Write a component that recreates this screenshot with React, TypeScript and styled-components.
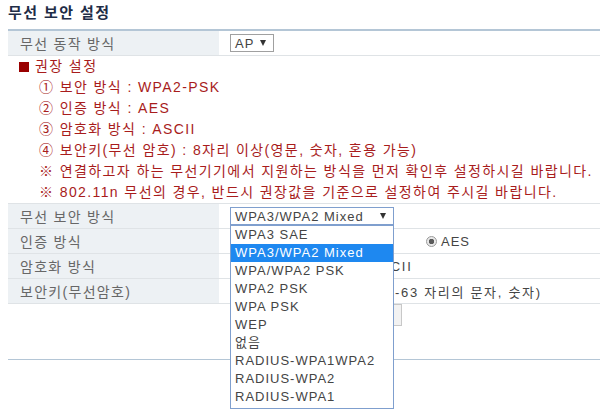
import * as React from 'react'
import styled, { createGlobalStyle } from 'styled-components'

const GlobalStyle = createGlobalStyle`
  html, body {
    margin: 0;
    padding: 0;
    background: #ffffff;
  }
  body {
    font-family: "Liberation Sans", "Noto Sans CJK KR", sans-serif;
    font-size: 13px;
  }
`

const colors = {
  navy: '#1f2d47',
  red: '#a81c1c',
  darkRed: '#990000',
  label: '#676767',
  labelBg: '#edf1f4',
  rowLine: '#dfe3e6',
  tableLine: '#b4c6d6',
  selectBlue: '#7f9fce',
  highlight: '#1e88f0',
}

const Page = styled.div`
  width: 592px;
  min-height: 100vh;
  padding-left: 8px;
`

const Title = styled.h1`
  margin: 0;
  height: 29px;
  box-sizing: border-box;
  padding-top: 4px;
  font-size: 15px;
  line-height: 18px;
  font-weight: bold;
  letter-spacing: 1.4px;
  color: ${colors.navy};
`

const Table = styled.div<{ $top: 'strong' | 'light' }>`
  display: flex;
  flex-direction: column;
  border-top: ${p => (p.$top === 'strong' ? `2px solid ${colors.tableLine}` : `1px solid ${colors.rowLine}`)};
`

const Row = styled.div`
  display: flex;
  height: 24px;
  border-bottom: 1px solid ${colors.rowLine};
`

const Label = styled.div`
  width: 211px;
  flex-shrink: 0;
  box-sizing: border-box;
  padding-left: 12px;
  display: flex;
  align-items: center;
  background: ${colors.labelBg};
  color: ${colors.label};
  font-size: 14px;
  letter-spacing: 1.3px;
`

const Value = styled.div`
  flex: 1;
  padding-left: 11px;
  display: flex;
  align-items: center;
  color: #444;
  letter-spacing: 1px;
`

const Arrow = styled.span`
  width: 0;
  height: 0;
  border-left: 3.5px solid transparent;
  border-right: 3.5px solid transparent;
  border-top: 6px solid #333;
`

const SelectBox = styled.div<{ $width: number; $open?: boolean }>`
  position: relative;
  width: ${p => p.$width}px;
  height: 18px;
  box-sizing: border-box;
  padding: 0 7px 0 4px;
  display: flex;
  align-items: center;
  justify-content: space-between;
  border: 1px solid ${p => (p.$open ? colors.selectBlue : '#a0a0a0')};
  background: #fff;
  color: #444;
  font-size: 13px;
  letter-spacing: 1px;
`

const OptionList = styled.ul`
  position: absolute;
  top: 17px;
  left: -1px;
  width: 164px;
  box-sizing: border-box;
  margin: 0;
  padding: 0 0 2px;
  list-style: none;
  border: 1px solid ${colors.selectBlue};
  background: #fff;
  z-index: 10;
`

const OptionItem = styled.li<{ $selected?: boolean }>`
  height: 18px;
  line-height: 18px;
  padding-left: 4px;
  background: ${p => (p.$selected ? colors.highlight : 'transparent')};
  color: ${p => (p.$selected ? '#fff' : '#444')};
  white-space: nowrap;
`

const Notice = styled.div`
  padding: 0 0 0 11px;
  color: ${colors.red};
  font-size: 14px;
  letter-spacing: 1.4px;
  line-height: 21px;
`

const NoticeHead = styled.div`
  display: flex;
  align-items: center;
  gap: 6px;
`

const Square = styled.span`
  width: 10px;
  height: 10px;
  background: ${colors.darkRed};
`

const NoticeLine = styled.div`
  padding-left: 20px;
  white-space: nowrap;
`

const RadioOption = styled.label<{ $minWidth?: number }>`
  display: flex;
  align-items: center;
  gap: 4px;
  min-width: ${p => (p.$minWidth ? `${p.$minWidth}px` : 'auto')};
  letter-spacing: 1px;
`

const RadioDot = styled.span<{ $checked?: boolean }>`
  width: 11px;
  height: 11px;
  box-sizing: border-box;
  border-radius: 50%;
  border: 1px solid #9a9a9a;
  background: ${p =>
    p.$checked ? 'radial-gradient(circle, #5a5a5a 0 2.5px, #e8e8e8 3px)' : '#f4f4f4'};
`

const KeyInput = styled.div`
  width: 144px;
  height: 18px;
  box-sizing: border-box;
  border: 1px solid #b0b0b0;
  margin-right: 6px;
`

const Hint = styled.span`
  letter-spacing: 1.7px;
  white-space: nowrap;
`

const ButtonRow = styled.div`
  height: 56px;
  box-sizing: border-box;
  padding-left: 334px;
  border-bottom: 1px solid ${colors.tableLine};
`

const Button = styled.div`
  width: 60px;
  height: 22px;
  box-sizing: border-box;
  border: 1px solid #c8c8c8;
  background: #f2f2f2;
  display: flex;
  align-items: center;
  justify-content: center;
  color: #333;
`

const securityModes = [
  'WPA3 SAE',
  'WPA3/WPA2 Mixed',
  'WPA/WPA2 PSK',
  'WPA2 PSK',
  'WPA PSK',
  'WEP',
  '없음',
  'RADIUS-WPA1WPA2',
  'RADIUS-WPA2',
  'RADIUS-WPA1',
]

const notices = [
  '① 보안 방식 : WPA2-PSK',
  '② 인증 방식 : AES',
  '③ 암호화 방식 : ASCII',
  '④ 보안키(무선 암호) : 8자리 이상(영문, 숫자, 혼용 가능)',
  '※ 연결하고자 하는 무선기기에서 지원하는 방식을 먼저 확인후 설정하시길 바랍니다.',
  '※ 802.11n 무선의 경우, 반드시 권장값을 기준으로 설정하여 주시길 바랍니다.',
]

const App = () => {
  const selected = 'WPA3/WPA2 Mixed'
  return (
    <Page>
      <GlobalStyle />
      <Title>무선 보안 설정</Title>

      <Table $top="strong">
        <Row>
          <Label>무선 동작 방식</Label>
          <Value>
            <SelectBox $width={44}>
              AP <Arrow />
            </SelectBox>
          </Value>
        </Row>
      </Table>

      <Notice>
        <NoticeHead>
          <Square />
          권장 설정
        </NoticeHead>
        {notices.map(text => (
          <NoticeLine key={text}>{text}</NoticeLine>
        ))}
      </Notice>

      <Table $top="light">
        <Row>
          <Label>무선 보안 방식</Label>
          <Value>
            <SelectBox $width={164} $open>
              {selected} <Arrow />
              <OptionList>
                {securityModes.map(mode => (
                  <OptionItem key={mode} $selected={mode === selected}>
                    {mode}
                  </OptionItem>
                ))}
              </OptionList>
            </SelectBox>
          </Value>
        </Row>
        <Row>
          <Label>인증 방식</Label>
          <Value>
            <RadioOption $minWidth={196}>
              <RadioDot /> TKIP
            </RadioOption>
            <RadioOption>
              <RadioDot $checked /> AES
            </RadioOption>
          </Value>
        </Row>
        <Row>
          <Label>암호화 방식</Label>
          <Value>
            <RadioOption $minWidth={140}>
              <RadioDot /> HEX
            </RadioOption>
            <Hint>ASCII</Hint>
          </Value>
        </Row>
        <Row>
          <Label>보안키(무선암호)</Label>
          <Value>
            <KeyInput />
            <Hint>(8-63 자리의 문자, 숫자)</Hint>
          </Value>
        </Row>
      </Table>

      <ButtonRow>
        <Button>적용</Button>
      </ButtonRow>
    </Page>
  )
}

export default App
